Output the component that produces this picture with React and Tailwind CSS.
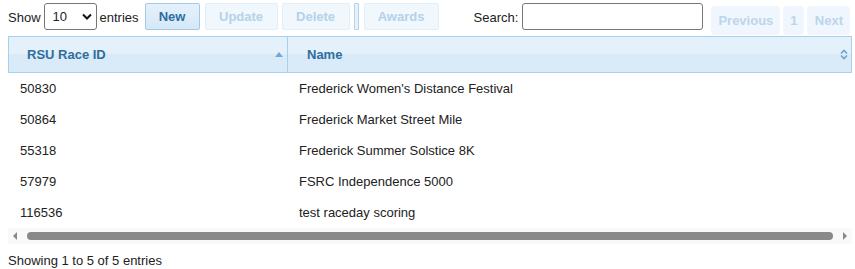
import React from 'react';

const rows = [
    { id: '50830', name: "Frederick Women's Distance Festival" },
    { id: '50864', name: 'Frederick Market Street Mile' },
    { id: '55318', name: 'Frederick Summer Solstice 8K' },
    { id: '57979', name: 'FSRC Independence 5000' },
    { id: '116536', name: 'test raceday scoring' },
];

function Btn({ children, disabled, className = '' }) {
    return (
        <button
            className={
                'h-[27px] shrink-0 rounded-[2px] border px-0 text-[13px] font-bold ' +
                (disabled
                    ? 'border-[#e3eef8] bg-[#f0f7fd] text-[#b6d2e8]'
                    : 'border-[#a6c9e2] bg-gradient-to-b from-[#e4f1fb] to-[#d5e8f8] text-[#2e6e9e]') +
                ' ' +
                className
            }
        >
            {children}
        </button>
    );
}

function PageBtn({ children, className = '' }) {
    return (
        <span className={'flex h-[29px] items-center justify-center rounded-[4px] bg-[#eff6fd] text-[13px] font-bold text-[#bcd5ea] ' + className}>
            {children}
        </span>
    );
}

export default function App() {
    return (
        <div className="w-[855px] bg-white text-[13px] text-[#222]" style={{ fontFamily: '"Liberation Sans", Arial, sans-serif' }}>
            {/* toolbar */}
            <div className="flex h-[36px] items-start pt-[3px] pl-[8px]">
                <span className="mt-[5px]">Show</span>
                <div className="ml-[3px] flex h-[27px] w-[53px] shrink-0 items-center justify-between rounded-[3px] border border-[#767676] pl-[8px] pr-[4px]">
                    <span>10</span>
                    <svg width="10" height="7" viewBox="0 0 10 7">
                        <path d="M1 1.5 L5 5.5 L9 1.5" fill="none" stroke="#111" strokeWidth="2" />
                    </svg>
                </div>
                <span className="ml-[3px] mt-[5px]">entries</span>
                <div className="ml-[6px] flex">
                    <Btn className="w-[55px]">New</Btn>
                    <Btn disabled className="ml-[5px] w-[73px]">Update</Btn>
                    <Btn disabled className="ml-[4px] w-[68px]">Delete</Btn>
                    <span className="ml-[4px] h-[27px] w-[5px] shrink-0 rounded-[1px] border border-[#b3d1e8] bg-[#e6f1fb]" />
                    <Btn disabled className="ml-[5px] w-[75px]">Awards</Btn>
                </div>
                <span className="ml-[35px] mt-[5px]">Search:</span>
                <div className="ml-[4px] h-[27px] w-[181px] shrink-0 rounded-[3px] border border-[#767676]" />
                <div className="ml-[8px] mt-[3px] flex gap-[3px]">
                    <PageBtn className="w-[69px]">Previous</PageBtn>
                    <PageBtn className="w-[21px]">1</PageBtn>
                    <PageBtn className="w-[43px]">Next</PageBtn>
                </div>
            </div>

            {/* table */}
            <div className="ml-[8px] w-[844px]">
                <div className="flex h-[37px] border border-[#aacfea] bg-gradient-to-b from-[#e4f1fb] from-50% to-[#d9eaf8] to-50% font-bold text-[#2e6e9e]">
                    <div className="flex w-[279px] items-center justify-between border-r border-[#aacfea] pl-[18px] pr-[4px]">
                        <span>RSU Race ID</span>
                        <svg width="8" height="5" viewBox="0 0 8 5">
                            <path d="M0 5 L4 0 L8 5 Z" fill="#74a7d4" />
                        </svg>
                    </div>
                    <div className="flex flex-1 items-center justify-between pl-[19px] pr-[3px]">
                        <span>Name</span>
                        <svg width="8" height="11" viewBox="0 0 8 11">
                            <path d="M1 4.5 L4 1.5 L7 4.5" fill="none" stroke="#6fa1cf" strokeWidth="1.6" />
                            <path d="M1 6.5 L4 9.5 L7 6.5" fill="none" stroke="#6fa1cf" strokeWidth="1.6" />
                        </svg>
                    </div>
                </div>
                {rows.map((r) => (
                    <div key={r.id} className="flex h-[31px] items-center">
                        <div className="w-[280px] pl-[12px]">{r.id}</div>
                        <div className="pl-[11px]">{r.name}</div>
                    </div>
                ))}
                {/* horizontal scrollbar */}
                <div className="flex h-[16px] items-center bg-[#f9f9f9] px-[3px]">
                    <svg width="8" height="8" viewBox="0 0 8 8">
                        <path d="M6 0 L2 4 L6 8 Z" fill="#888" />
                    </svg>
                    <div className="ml-[8px] mr-[8px] h-[8px] flex-1 rounded-full bg-[#898989]" />
                    <svg width="8" height="8" viewBox="0 0 8 8">
                        <path d="M2 0 L6 4 L2 8 Z" fill="#888" />
                    </svg>
                </div>
            </div>

            <div className="pl-[8px] pt-[7px] pb-[4px]">Showing 1 to 5 of 5 entries</div>
        </div>
    );
}
